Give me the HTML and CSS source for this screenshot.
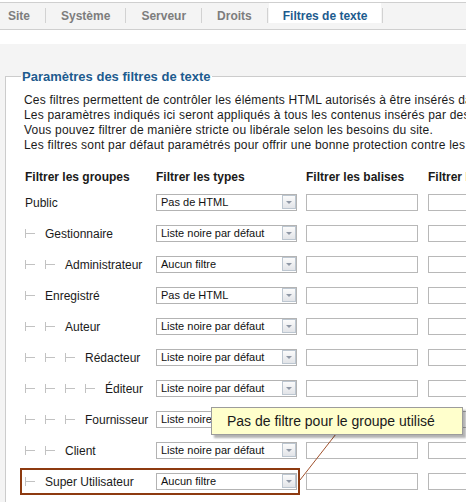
FILE: index.html
```html
<!DOCTYPE html>
<html lang="fr">
<head>
<meta charset="utf-8">
<title>Filtres de texte</title>
<link rel="stylesheet" href="styles.css">
</head>
<body>
<div class="tabs">
  <span class="tab first">Site</span><span class="sep"></span>
  <span class="tab">Système</span><span class="sep"></span>
  <span class="tab">Serveur</span><span class="sep"></span>
  <span class="tab">Droits</span><span class="sep"></span>
  <span class="tab active">Filtres de texte</span><span class="sep"></span>
</div>
<div class="content">
  <fieldset class="panel">
    <legend>Paramètres des filtres de texte</legend>
    <p class="intro">Ces filtres permettent de contrôler les éléments HTML autorisés à être insérés dans les contenus.<br>
    Les paramètres indiqués ici seront appliqués à tous les contenus insérés par des utilisateurs des groupes sélectionnés.<br>
    Vous pouvez filtrer de manière stricte ou libérale selon les besoins du site.<br>
    Les filtres sont par défaut paramétrés pour offrir une bonne protection contre les éléments dangereux.</p>
    <div class="grid">
      <div class="head">Filtrer les groupes</div>
      <div class="head">Filtrer les types</div>
      <div class="head">Filtrer les balises</div>
      <div class="head">Filtrer les attributs</div>

      <div class="group">Public</div>
      <div class="cell"><div class="select"><span>Pas de HTML</span><span class="arrow"></span></div></div>
      <div class="cell"><div class="input"></div></div>
      <div class="cell"><div class="input wide"></div></div>

      <div class="group"><span class="tree"></span>Gestionnaire</div>
      <div class="cell"><div class="select"><span>Liste noire par défaut</span><span class="arrow"></span></div></div>
      <div class="cell"><div class="input"></div></div>
      <div class="cell"><div class="input wide"></div></div>

      <div class="group"><span class="tree"></span><span class="tree"></span>Administrateur</div>
      <div class="cell"><div class="select"><span>Aucun filtre</span><span class="arrow"></span></div></div>
      <div class="cell"><div class="input"></div></div>
      <div class="cell"><div class="input wide"></div></div>

      <div class="group"><span class="tree"></span>Enregistré</div>
      <div class="cell"><div class="select"><span>Pas de HTML</span><span class="arrow"></span></div></div>
      <div class="cell"><div class="input"></div></div>
      <div class="cell"><div class="input wide"></div></div>

      <div class="group"><span class="tree"></span><span class="tree"></span>Auteur</div>
      <div class="cell"><div class="select"><span>Liste noire par défaut</span><span class="arrow"></span></div></div>
      <div class="cell"><div class="input"></div></div>
      <div class="cell"><div class="input wide"></div></div>

      <div class="group"><span class="tree"></span><span class="tree"></span><span class="tree"></span>Rédacteur</div>
      <div class="cell"><div class="select"><span>Liste noire par défaut</span><span class="arrow"></span></div></div>
      <div class="cell"><div class="input"></div></div>
      <div class="cell"><div class="input wide"></div></div>

      <div class="group"><span class="tree"></span><span class="tree"></span><span class="tree"></span><span class="tree"></span>Éditeur</div>
      <div class="cell"><div class="select"><span>Liste noire par défaut</span><span class="arrow"></span></div></div>
      <div class="cell"><div class="input"></div></div>
      <div class="cell"><div class="input wide"></div></div>

      <div class="group"><span class="tree"></span><span class="tree"></span><span class="tree"></span>Fournisseur</div>
      <div class="cell"><div class="select"><span>Liste noire par défaut</span><span class="arrow"></span></div></div>
      <div class="cell"><div class="input"></div></div>
      <div class="cell"><div class="input wide"></div></div>

      <div class="group"><span class="tree"></span><span class="tree"></span>Client</div>
      <div class="cell"><div class="select"><span>Liste noire par défaut</span><span class="arrow"></span></div></div>
      <div class="cell"><div class="input"></div></div>
      <div class="cell"><div class="input wide"></div></div>

      <div class="group"><span class="tree"></span>Super Utilisateur</div>
      <div class="cell"><div class="select"><span>Aucun filtre</span><span class="arrow"></span></div></div>
      <div class="cell"><div class="input"></div></div>
      <div class="cell"><div class="input wide"></div></div>
    </div>
  </fieldset>
</div>

<div class="highlight"></div>
<svg class="pointer" width="466" height="502" viewBox="0 0 466 502">
  <line x1="336" y1="434" x2="300" y2="480" stroke="#a0522d" stroke-width="1"/>
</svg>
<div class="tooltip">Pas de filtre pour le groupe utilisé</div>
</body>
</html>
```

FILE: styles.css
```css
html, body {
  margin: 0;
  padding: 0;
}
body {
  width: 466px;
  height: 502px;
  overflow: hidden;
  position: relative;
  background: #ffffff;
  font-family: "Liberation Sans", Arial, sans-serif;
  font-size: 12px;
  color: #1a1a1a;
}

/* Tabs */
.tabs {
  margin-top: 2px;
  height: 26px;
  border-top: 1px solid #cfcfcf;
  border-bottom: 1px solid #cfcfcf;
  background: #f4f4f4;
  display: flex;
  align-items: flex-start;
  white-space: nowrap;
}
.tab {
  height: 14px;
  line-height: 14px;
  padding: 6px 15px 0;
  font-weight: bold;
  font-size: 12px;
  color: #7d7d7d;
}
.tab.first {
  padding-left: 8px;
}
.tab.active {
  background: #ffffff;
  color: #1d5b8e;
  margin: 0 1px;
  padding: 6px 14px 0;
}
.sep {
  width: 1px;
  height: 15px;
  margin-top: 5px;
  background: #d2d2d2;
}

/* Content */
.content {
  margin-top: 14px;
  padding-top: 25px;
  background: #f4f4f4;
  height: 480px;
}
.panel {
  margin: 0 0 0 5px;
  width: 800px;
  min-height: 460px;
  border: 1px solid #cccccc;
  padding: 9px 0 0 18px;
  background: #ffffff;
}
.panel legend {
  font-size: 13px;
  line-height: 15px;
  font-weight: bold;
  color: #1d5b8e;
  padding: 0 1px;
  margin-left: -3px;
}
.intro {
  margin: 0;
  line-height: 15px;
  letter-spacing: 0.2px;
  white-space: nowrap;
}

/* Grid */
.grid {
  margin: 17px 0 0 1px;
  display: grid;
  grid-template-columns: 131px 150px 122px 200px;
  grid-template-rows: 17px repeat(10, 31px);
  white-space: nowrap;
}
.head {
  font-weight: bold;
  line-height: 15px;
  color: #1a1a1a;
}
.group {
  display: flex;
  align-items: center;
  color: #1a1a1a;
}
.tree {
  display: inline-block;
  width: 9px;
  height: 9px;
  border-left: 1px solid #c2c2c2;
  background: linear-gradient(#c2c2c2, #c2c2c2) no-repeat 0 50% / 100% 1px;
  margin-right: 10px;
}
.cell {
  display: flex;
  align-items: center;
}
.select {
  box-sizing: border-box;
  width: 141px;
  height: 17px;
  border: 1px solid #b3b3b3;
  background: #ffffff;
  display: flex;
  justify-content: space-between;
  align-items: flex-start;
  padding-left: 4px;
  font-size: 11px;
  line-height: 15px;
  color: #111;
}
.arrow {
  box-sizing: border-box;
  width: 14px;
  height: 14px;
  border: 1px solid #bcc6d0;
  background: linear-gradient(#fbfbfb, #e2e4e8);
  display: flex;
  align-items: center;
  justify-content: center;
}
.arrow::after {
  content: "";
  width: 0;
  height: 0;
  border-top: 3px solid #8f98a6;
  border-left: 3px solid transparent;
  border-right: 3px solid transparent;
}
.input {
  box-sizing: border-box;
  width: 112px;
  height: 17px;
  border: 1px solid #b8b8b8;
  background: #ffffff;
}
.input.wide {
  width: 180px;
}

/* Annotation overlays */
.highlight {
  position: absolute;
  left: 20px;
  top: 468px;
  width: 280px;
  height: 27px;
  box-sizing: border-box;
  border: 2px solid #8d3a10;
}
.pointer {
  position: absolute;
  left: 0;
  top: 0;
  pointer-events: none;
}
.tooltip {
  position: absolute;
  left: 211px;
  top: 407px;
  width: 252px;
  height: 28px;
  box-sizing: border-box;
  border: 1px solid #9c9c9c;
  background: #ffffcc;
  box-shadow: 3px 3px 2px rgba(0, 0, 0, 0.3);
  font-size: 14px;
  line-height: 26px;
  padding-left: 15px;
  color: #1a1a1a;
  white-space: nowrap;
}
```
